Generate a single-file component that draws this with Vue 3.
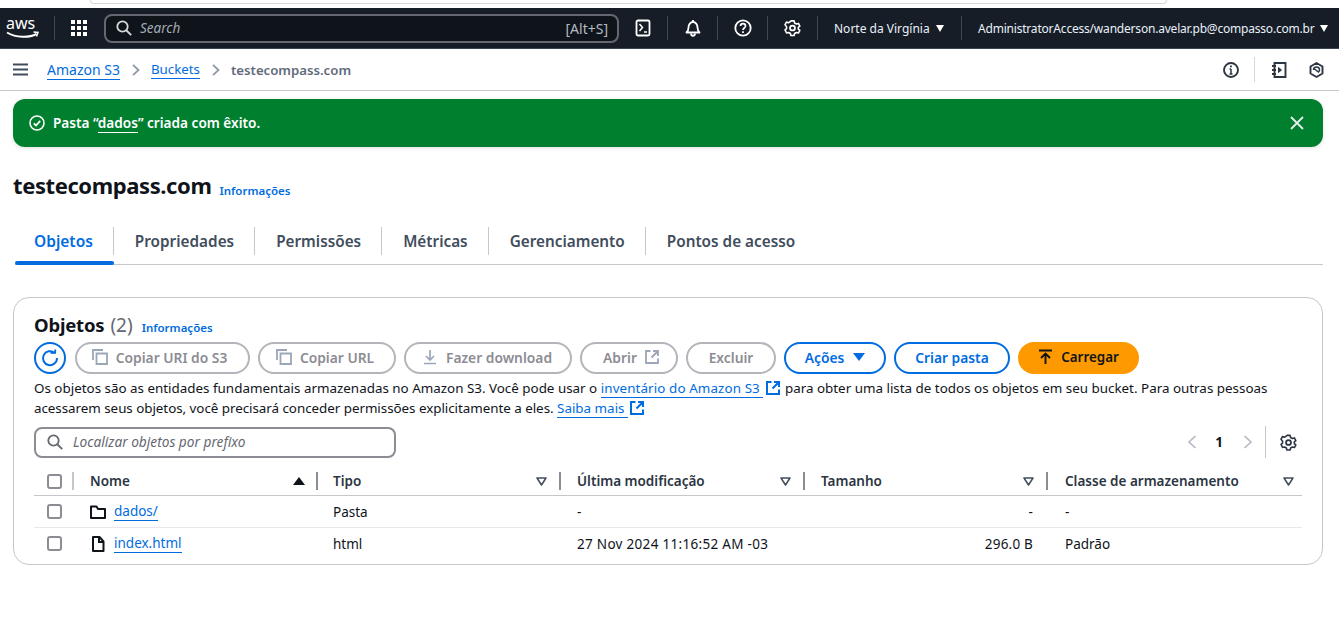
<template>
  <div class="page">
    <div class="chrome"><div class="chrome-tab"></div></div>

    <header class="topnav">
      <svg class="aws" width="36" height="30" viewBox="0 0 36 30">
        <text x="0" y="16" class="aws-text">aws</text>
        <g transform="translate(0 4.500)">
          <path d="M1 15c9 5.500 22 5.500 29.500 1.500" fill="none" stroke="#fff" stroke-width="2" />
          <path d="M27.500 14.500l4.500 .5-1.500 4" fill="none" stroke="#fff" stroke-width="1.500" />
        </g>
      </svg>
      <span class="nav-sep first"></span>
      <svg class="grid-ic" width="16" height="16" viewBox="0 0 16 16" fill="#fff">
        <rect v-for="c in dots" :key="c.k" :x="c.x" :y="c.y" width="4" height="4" />
      </svg>
      <div class="search">
        <svg width="16" height="16" viewBox="0 0 16 16" fill="none" stroke="#d5dbdb" stroke-width="1.800"><circle cx="6.500" cy="6.500" r="5.200" /><path d="M10.500 10.500l4.700 4.700" /></svg>
        <span class="search-ph">Search</span>
        <span class="search-key">[Alt+S]</span>
      </div>
      <button class="nav-ic">
        <svg width="16" height="18" viewBox="0 0 16 18" fill="none" stroke="#fff" stroke-width="1.800"><rect x="1.500" y="1.500" width="13" height="15" rx="1.500" /><path d="M4.500 5l3 3.500-3 3.500M9 13h3" stroke-width="1.500" /></svg>
      </button>
      <span class="nav-sep"></span>
      <button class="nav-ic wide">
        <svg width="16" height="18" viewBox="0 0 16 18" fill="none" stroke="#fff" stroke-width="1.800"><path d="M1.500 13.500c1.500-1.500 2-2.500 2-5 0-3 2-5.500 4.500-5.500s4.500 2.500 4.500 5.500c0 2.500 .5 3.500 2 5z" stroke-linejoin="round" /><path d="M6 14.500c0 3 4 3 4 0" /><path d="M8 1v2" /></svg>
      </button>
      <span class="nav-sep"></span>
      <button class="nav-ic wide">
        <svg width="18" height="18" viewBox="0 0 18 18" fill="none" stroke="#fff" stroke-width="1.800"><circle cx="9" cy="9" r="7.700" /><path d="M6.500 7c0-3.200 5-3.200 5 0 0 2-2.500 2-2.500 4" stroke-width="1.700" /><path d="M9 12.300v1.700" /></svg>
      </button>
      <span class="nav-sep"></span>
      <button class="nav-ic wide">
        <svg width="17" height="18" viewBox="0 0 24 24" fill="none" stroke="#fff" stroke-width="2.500"><circle cx="12" cy="12" r="3.500" /><path d="M9.500 2h5l.8 3.200 2.800 1.600 3.200-.9 2.200 4.100-2.400 2 0 2.900 0 0 2.400 2-2.200 4.100-3.200-.9-2.800 1.600-.8 3.200h-5l-.8-3.200-2.800-1.600-3.200.9L.3 16l2.400-2v-3L.3 8l2.200-4.100 3.200.9 2.800-1.600z" stroke-linejoin="round" transform="translate(1.200 .2) scale(.9)" /></svg>
      </button>
      <span class="nav-sep"></span>
      <span class="region">Norte da Virgínia <i class="caret"></i></span>
      <span class="nav-sep"></span>
      <span class="account">AdministratorAccess/wanderson.avelar.pb@compasso.com.br <i class="caret"></i></span>
    </header>

    <div class="crumbs">
      <svg class="burger" width="15" height="13" viewBox="0 0 15 13" fill="#414d5c"><rect width="15" height="2" y="0.500" /><rect width="15" height="2" y="5.500" /><rect width="15" height="2" y="10.500" /></svg>
      <a class="link crumb-first">Amazon S3</a>
      <svg class="chev" width="8" height="12" viewBox="0 0 8 12" fill="none" stroke="#8d99a8" stroke-width="1.800"><path d="M1 .8l5.500 5.200L1 11.200" /></svg>
      <a class="link crumb-second">Buckets</a>
      <svg class="chev" width="8" height="12" viewBox="0 0 8 12" fill="none" stroke="#8d99a8" stroke-width="1.800"><path d="M1 .8l5.500 5.200L1 11.200" /></svg>
      <span class="crumb-cur">testecompass.com</span>
      <div class="crumb-tools">
        <svg width="16" height="16" viewBox="0 0 16 16" fill="none" stroke="#2c3542" stroke-width="1.900"><circle cx="8" cy="8" r="7" /><path d="M8 7v5M6.500 12h3M6.500 7H8" stroke-width="1.500" /><path d="M8 3.500v1.800" stroke-width="1.800" /></svg>
        <span class="tool-sep"></span>
        <svg width="16" height="16" viewBox="0 0 16 16" fill="none" stroke="#2c3542" stroke-width="1.900"><path d="M3.500 1h11v14h-11zM1 4h4M1 8h4M1 12h4" /><path d="M7.500 5.500l3 2.500-3 2.500z" fill="#2c3542" stroke-width="1" /></svg>
        <svg class="tool-last" width="15" height="16" viewBox="0 0 15 16" fill="none" stroke="#2c3542" stroke-width="1.900"><path d="M7.500 1l6 3.500v7l-6 3.500-6-3.500v-7z" stroke-linejoin="round" /><path d="M4.500 8a3 3 0 0 1 6 0c0 1-.5 1.500-1 2L5.500 7" stroke-width="1.500" /></svg>
      </div>
    </div>

    <div class="flash">
      <svg width="16" height="16" viewBox="0 0 16 16" fill="none" stroke="#fff" stroke-width="1.600"><circle cx="8" cy="8" r="7" /><path d="M4.800 8.300l2.200 2.200 4.200-4.700" stroke-width="1.800" /></svg>
      <span class="flash-msg">Pasta “<u>dados</u>” criada com êxito.</span>
      <svg class="flash-x" width="14" height="14" viewBox="0 0 14 14" fill="none" stroke="#e9ecef" stroke-width="1.800"><path d="M1 1l12 12M13 1L1 13" /></svg>
    </div>

    <div class="title-row">
      <h1>testecompass.com</h1>
      <a class="info">Informações</a>
    </div>

    <nav class="tabs">
      <span v-for="(t, i) in tabs" :key="t" class="tab" :class="{ active: i === 0 }">
        <span class="tab-label">{{ t }}</span>
      </span>
    </nav>

    <section class="card">
      <div class="card-head">
        <h2>Objetos</h2>
        <span class="count">(2)</span>
        <a class="info">Informações</a>
      </div>

      <div class="actions">
        <button class="btn-refresh">
          <svg width="18" height="18" viewBox="0 0 18 18" fill="none" stroke="#006ce0" stroke-width="2"><path d="M13.500 3.800A7 7 0 1 0 16 9" /><path d="M9.500 3.800h4.700V.5" stroke-width="1.800" /></svg>
        </button>
        <button class="btn off w1"><svg class="copy" width="16" height="16" viewBox="0 0 16 16" fill="none" stroke="#9ba7b6" stroke-width="1.800"><path d="M1 11V1h10" /><path d="M4.500 4.500h10.500v10.500H4.500z" /></svg>Copiar URI do S3</button>
        <button class="btn off w2"><svg class="copy" width="16" height="16" viewBox="0 0 16 16" fill="none" stroke="#9ba7b6" stroke-width="1.800"><path d="M1 11V1h10" /><path d="M4.500 4.500h10.500v10.500H4.500z" /></svg>Copiar URL</button>
        <button class="btn off w3"><svg class="copy" width="16" height="16" viewBox="0 0 16 16" fill="none" stroke="#9ba7b6" stroke-width="1.700"><path d="M8 1v9.500M4 7l4 4 4-4M2 14.500h12" /></svg>Fazer download</button>
        <button class="btn off w4">Abrir<svg class="ext" width="14" height="14" viewBox="0 0 14 14" fill="none" stroke="#9ba7b6" stroke-width="1.800"><path d="M5.500 1H1v12h12V8.500M8 1h5v5M13 1L6.500 7.500" /></svg></button>
        <button class="btn off w5">Excluir</button>
        <button class="btn blue w6">Ações<i class="caret big"></i></button>
        <button class="btn blue w7">Criar pasta</button>
        <button class="btn primary w8"><svg class="copy" width="15" height="16" viewBox="0 0 15 16" fill="none" stroke="#0f141a" stroke-width="1.900"><path d="M1 1.500h13M7.500 15V5M3 9l4.500-4.500L12 9" /></svg>Carregar</button>
      </div>

      <p class="desc">Os objetos são as entidades fundamentais armazenadas no Amazon S3. Você pode usar o <a class="link wide-link">inventário do Amazon S3&nbsp;</a><svg class="ext-link gap" width="14" height="14" viewBox="0 0 14 14" fill="none" stroke="#006ce0" stroke-width="2"><path d="M5.500 1H1v12h12V8.500M8 1h5v5M13 1L6.500 7.500" /></svg> para obter uma lista de todos os objetos em seu bucket. Para outras pessoas <span class="tight">acessarem seus objetos, você precisará conceder permissões explicitamente a eles.</span> <a class="link">Saiba mais&nbsp;</a><svg class="ext-link" width="14" height="14" viewBox="0 0 14 14" fill="none" stroke="#006ce0" stroke-width="2"><path d="M5.500 1H1v12h12V8.500M8 1h5v5M13 1L6.500 7.500" /></svg></p>

      <div class="filter-row">
        <div class="filter">
          <svg width="16" height="16" viewBox="0 0 16 16" fill="none" stroke="#656871" stroke-width="1.800"><circle cx="6.500" cy="6.500" r="5.200" /><path d="M10.500 10.500l4.700 4.700" /></svg>
          <span>Localizar objetos por prefixo</span>
        </div>
        <div class="pager">
          <svg width="10" height="14" viewBox="0 0 10 14" fill="none" stroke="#b4bac4" stroke-width="1.700"><path d="M8.500 1L2 7l6.500 6" /></svg>
          <b>1</b>
          <svg width="10" height="14" viewBox="0 0 10 14" fill="none" stroke="#b4bac4" stroke-width="1.700"><path d="M1.500 1L8 7l-6.500 6" /></svg>
          <span class="pager-sep"></span>
          <svg width="17" height="17" viewBox="0 0 24 24" fill="none" stroke="#2c3542" stroke-width="2.500"><circle cx="12" cy="12" r="3.500" /><path d="M9.500 2h5l.8 3.200 2.800 1.600 3.200-.9 2.200 4.100-2.400 2 0 2.900 0 0 2.400 2-2.200 4.100-3.200-.9-2.800 1.600-.8 3.200h-5l-.8-3.200-2.800-1.600-3.200.9L.3 16l2.400-2v-3L.3 8l2.200-4.100 3.200.9 2.800-1.600z" stroke-linejoin="round" transform="translate(1.200 .2) scale(.9)" /></svg>
        </div>
      </div>

      <div class="table">
        <div class="row head">
          <div class="cell check"><span class="box"></span></div>
          <div v-for="(h, i) in headers" :key="h" class="cell th">
            <span>{{ h }}</span>
            <svg v-if="i === 0" width="12" height="8" viewBox="0 0 12 8" fill="#0f141a"><path d="M6 0l6 8H0z" /></svg>
            <svg v-else width="11" height="9" viewBox="0 0 11 9" fill="none" stroke="#414d5c" stroke-width="1.500"><path d="M1 1h9L5.500 8z" stroke-linejoin="round" /></svg>
          </div>
        </div>
        <div v-for="r in rows" :key="r.name" class="row">
          <div class="cell check"><span class="box"></span></div>
          <div class="cell name">
            <svg v-if="r.folder" width="16" height="14" viewBox="0 0 16 14" fill="none" stroke="#0f141a" stroke-width="2"><path d="M1 1.500h5.500L8 4h7v9H1z" stroke-linejoin="round" /></svg>
            <svg v-else width="16" height="16" viewBox="-1 0 16 16" fill="none" stroke="#0f141a" stroke-width="2"><path d="M2 1h6.500L12.500 5.500V15H2z" stroke-linejoin="round" /><path d="M8 1v5h4.500" /></svg>
            <a class="link">{{ r.name }}</a>
          </div>
          <div class="cell">{{ r.type }}</div>
          <div class="cell">{{ r.date }}</div>
          <div class="cell size">{{ r.size }}</div>
          <div class="cell">{{ r.cls }}</div>
        </div>
      </div>
    </section>
  </div>
</template>

<script setup>
const dots = []
for (let r = 0; r < 3; r++) {
  for (let c = 0; c < 3; c++) {
    dots.push({ k: r + '-' + c, x: c * 6, y: r * 6 })
  }
}

const tabs = ['Objetos', 'Propriedades', 'Permissões', 'Métricas', 'Gerenciamento', 'Pontos de acesso']
const headers = ['Nome', 'Tipo', 'Última modificação', 'Tamanho', 'Classe de armazenamento']
const rows = [
  { name: 'dados/', folder: true, type: 'Pasta', date: '-', size: '-', cls: '-' },
  { name: 'index.html', folder: false, type: 'html', date: '27 Nov 2024 11:16:52 AM -03', size: '296.0 B', cls: 'Padrão' }
]
</script>

<style>
html, body { background: #fff; }
</style>

<style scoped>
.page {
  width: 1339px;
  height: 618px;
  overflow: hidden;
  background: #fff;
  font-family: "Noto Sans", "Open Sans", sans-serif;
  font-size: 14px;
  color: #0f141a;
}

/* browser strip */
.chrome { height: 8px; background: #fff; padding-left: 90px; }
.chrome-tab {
  width: 1075px;
  height: 3px;
  border: 1px solid #d5d7da;
  border-top: 0;
  border-radius: 0 0 8px 8px;
}

/* top nav */
.topnav {
  height: 40px;
  background: #161d26;
  border-bottom: 1px solid #3b4350;
  display: flex;
  align-items: center;
  padding-left: 6px;
  color: #fff;
}
.aws { flex: none; }
.aws-text { font: 400 16px "Noto Sans", sans-serif; fill: #fff; }
.nav-sep { width: 1px; height: 24px; background: #3f4854; flex: none; }
.nav-sep.first { margin: 0 16px 0 12px; }
.grid-ic { flex: none; margin-right: 17px; }
.search {
  width: 515px;
  height: 29px;
  flex: none;
  box-sizing: border-box;
  background: #0f141a;
  border: 2px solid #656871;
  border-radius: 8px;
  display: flex;
  align-items: center;
  padding: 0 9px 0 10px;
  font-size: 13.500px;
}
.search-ph { margin-left: 8px; font-style: italic; color: #a4abb5; }
.search-key { margin-left: auto; color: #b4bac4; font-size: 14px; }
.nav-ic {
  background: none;
  border: 0;
  padding: 0;
  width: 48px;
  flex: none;
  display: flex;
  justify-content: center;
}
.nav-ic.wide { width: 49px; }
.region { width: 127px; padding-left: 16px; flex: none; font-size: 12px; white-space: nowrap; color: #e9f1fa; }
.account { padding-left: 16px; font-size: 12px; letter-spacing: -0.2px; white-space: nowrap; color: #e9f1fa; }
.caret {
  display: inline-block;
  width: 0;
  height: 0;
  border-left: 4.500px solid transparent;
  border-right: 4.500px solid transparent;
  border-top: 7px solid #fff;
  margin-left: 3px;
  vertical-align: 1px;
}

/* breadcrumbs */
.crumbs {
  height: 41px;
  border-bottom: 1px solid #c6c6cd;
  display: flex;
  align-items: center;
  padding-left: 13px;
}
.link { color: #006ce0; border-bottom: 1px solid #006ce0; }
.crumb-first { margin-left: 19px; }
.crumb-second { font-size: 13.300px; }
.chev { margin: 0 11px 0 12px; flex: none; }
.crumb-cur { color: #5f6b7a; font-weight: 600; font-size: 13.200px; }
.crumb-tools { margin-left: auto; display: flex; align-items: center; padding-right: 15px; }
.tool-sep { width: 1px; height: 25px; background: #d5d7da; margin: 0 16px 0 15px; }
.tool-last { margin-left: 22px; }

/* flash */
.flash {
  margin: 8px 16px 0 13px;
  height: 48px;
  background: #00802f;
  border-radius: 12px;
  display: flex;
  align-items: center;
  padding: 0 19px 0 16px;
  color: #fff;
  font-weight: 600;
  font-size: 13.600px;
  box-shadow: 0 1px 4px rgba(0, 7, 22, 0.12);
}
.flash-msg { margin: -2px 0 0 8px; }
.flash-msg u { text-decoration: none; border-bottom: 1px solid #fff; }
.flash-x { margin-left: auto; }

/* heading */
.title-row { margin: 24px 0 0 13px; height: 32px; display: flex; align-items: center; gap: 8px; }
h1 { margin: -4px 0 0; font-size: 22px; line-height: 32px; font-weight: 700; letter-spacing: -0.4px; }
.info { color: #006ce0; font-size: 11.500px; font-weight: 600; }
.title-row .info { margin-top: 6px; }

/* tabs */
.tabs {
  margin: 24px 16px 0 15px;
  height: 37px;
  border-bottom: 1px solid #c6c6cd;
  display: flex;
}
.tab {
  position: relative;
  height: 37px;
  display: flex;
  align-items: flex-start;
  padding: 0 21px;
  font-weight: 600;
  font-size: 15.300px;
  color: #414d5c;
  white-space: nowrap;
}
.tab-label { line-height: 28px; }
.tab:not(:last-child)::after {
  content: '';
  position: absolute;
  right: 0;
  top: 0;
  height: 28px;
  width: 1px;
  background: #c6c6cd;
}
.tab.active { color: #006ce0; padding-left: 19px; font-size: 15.500px; }
.tab.active::before {
  content: '';
  position: absolute;
  left: 0;
  right: 0;
  bottom: -1px;
  height: 4px;
  border-radius: 2px;
  background: #006ce0;
}

/* card */
.card {
  margin: 32px 16px 0 13px;
  height: 268px;
  box-sizing: border-box;
  border: 1px solid #c6c6cd;
  border-radius: 16px;
  padding: 14px 20px 0;
}
.card-head { display: flex; align-items: baseline; height: 26px; }
h2 { margin: 0; font-size: 18.500px; font-weight: 700; letter-spacing: -0.2px; }
.count { margin-left: 6px; font-size: 19px; color: #656871; }
.card-head .info { margin-left: 9px; }

.actions { display: flex; align-items: center; gap: 8px; margin-top: 4px; height: 32px; }
button { font-family: inherit; }
.btn-refresh {
  width: 32px;
  height: 32px;
  flex: none;
  padding: 0;
  display: flex;
  align-items: center;
  justify-content: center;
  margin-right: 1px;
  background: #fff;
  border: 2px solid #006ce0;
  border-radius: 50%;
}
.btn {
  height: 32px;
  box-sizing: border-box;
  border-radius: 16px;
  border: 2px solid #b4b4bb;
  background: #fff;
  display: flex;
  align-items: center;
  justify-content: center;
  flex: none;
  padding: 0 0 2px;
  font-size: 13.800px;
  font-weight: 600;
  white-space: nowrap;
}
.off { color: #8c8c94; }
.blue { color: #006ce0; border-color: #006ce0; }
.primary { background: #ff9900; border-color: #ff9900; color: #0f141a; font-size: 13.400px; }
.copy { margin-right: 8px; flex: none; }
.ext { margin-left: 8px; }
.w1 { width: 175px; padding-right: 6px; }
.w2 { width: 138px; padding-right: 4px; }
.w3 { width: 168px; padding-right: 2px; }
.w4 { width: 98px; padding-left: 4px; }
.w5 { width: 90px; }
.w6 { width: 102px; }
.w7 { width: 116px; }
.w8 { width: 121px; }
.caret.big { border-top-color: #006ce0; border-left-width: 6px; border-right-width: 6px; border-top-width: 8px; margin-left: 9px; vertical-align: 0; }

.desc { margin: 4px 0 0; font-size: 13.400px; line-height: 20px; color: #0f141a; width: 1268px; }
.wide-link { letter-spacing: 0.1px; }
.tight { letter-spacing: -0.04px; }
.ext-link { vertical-align: -2px; margin-left: 2px; }
.ext-link.gap { margin: 0 1px 0 3px; }

.filter-row { display: flex; justify-content: space-between; align-items: center; margin-top: 8px; height: 32px; }
.filter {
  width: 362px;
  height: 31px;
  box-sizing: border-box;
  border: 2px solid #8c8c94;
  border-radius: 8px;
  display: flex;
  align-items: center;
  gap: 10px;
  padding-left: 11px;
  font-style: italic;
  font-size: 13.700px;
  color: #656871;
}
.filter span { margin-top: -2px; }
.pager { display: flex; align-items: center; padding-right: 5px; }
.pager b { margin: 0 20px 0 18px; font-size: 13.500px; font-weight: 700; }
.pager-sep { width: 1px; height: 32px; background: #c6c6cd; margin: 0 14px 0 12px; }

.table { margin-top: 9px; }
.row {
  display: grid;
  grid-template-columns: 40px 244px 243px 244px 243px 254px;
  height: 31px;
  border-bottom: 1px solid #e8e8ec;
}
.row:last-child { border-bottom: 0; }
.row.head { height: 28px; border-bottom-color: #c6c6cd; }
.cell {
  display: flex;
  align-items: center;
  padding-left: 16px;
  font-size: 13.500px;
  white-space: nowrap;
}
.cell:nth-child(3) { padding-left: 15px; }
.cell:nth-child(4) { letter-spacing: 0.3px; }
.cell:nth-child(6) { padding-left: 17px; }
.cell.check { padding-left: 13px; }
.box {
  width: 15px;
  height: 15px;
  box-sizing: border-box;
  border: 2px solid #8c8c94;
  border-radius: 3px;
}
.th {
  position: relative;
  justify-content: space-between;
  padding-right: 14px;
  font-weight: 600;
  color: #2c3542;
}
.th svg { flex: none; }
.th.cell:nth-child(4) { letter-spacing: 0; }
.row.head .cell:not(:last-child)::after {
  content: '';
  position: absolute;
  right: 0;
  top: 5px;
  height: 18px;
  width: 2px;
  background: #8c8c94;
}
.row.head .check { position: relative; }
.row.head .check::after { background: #c6c6cd !important; }
.th:last-child { padding-right: 8px; }
.th:nth-child(2) { padding-right: 13px; }
.name { gap: 8px; }
.size { justify-content: flex-end; padding-right: 15px; letter-spacing: 0.2px; }
</style>
